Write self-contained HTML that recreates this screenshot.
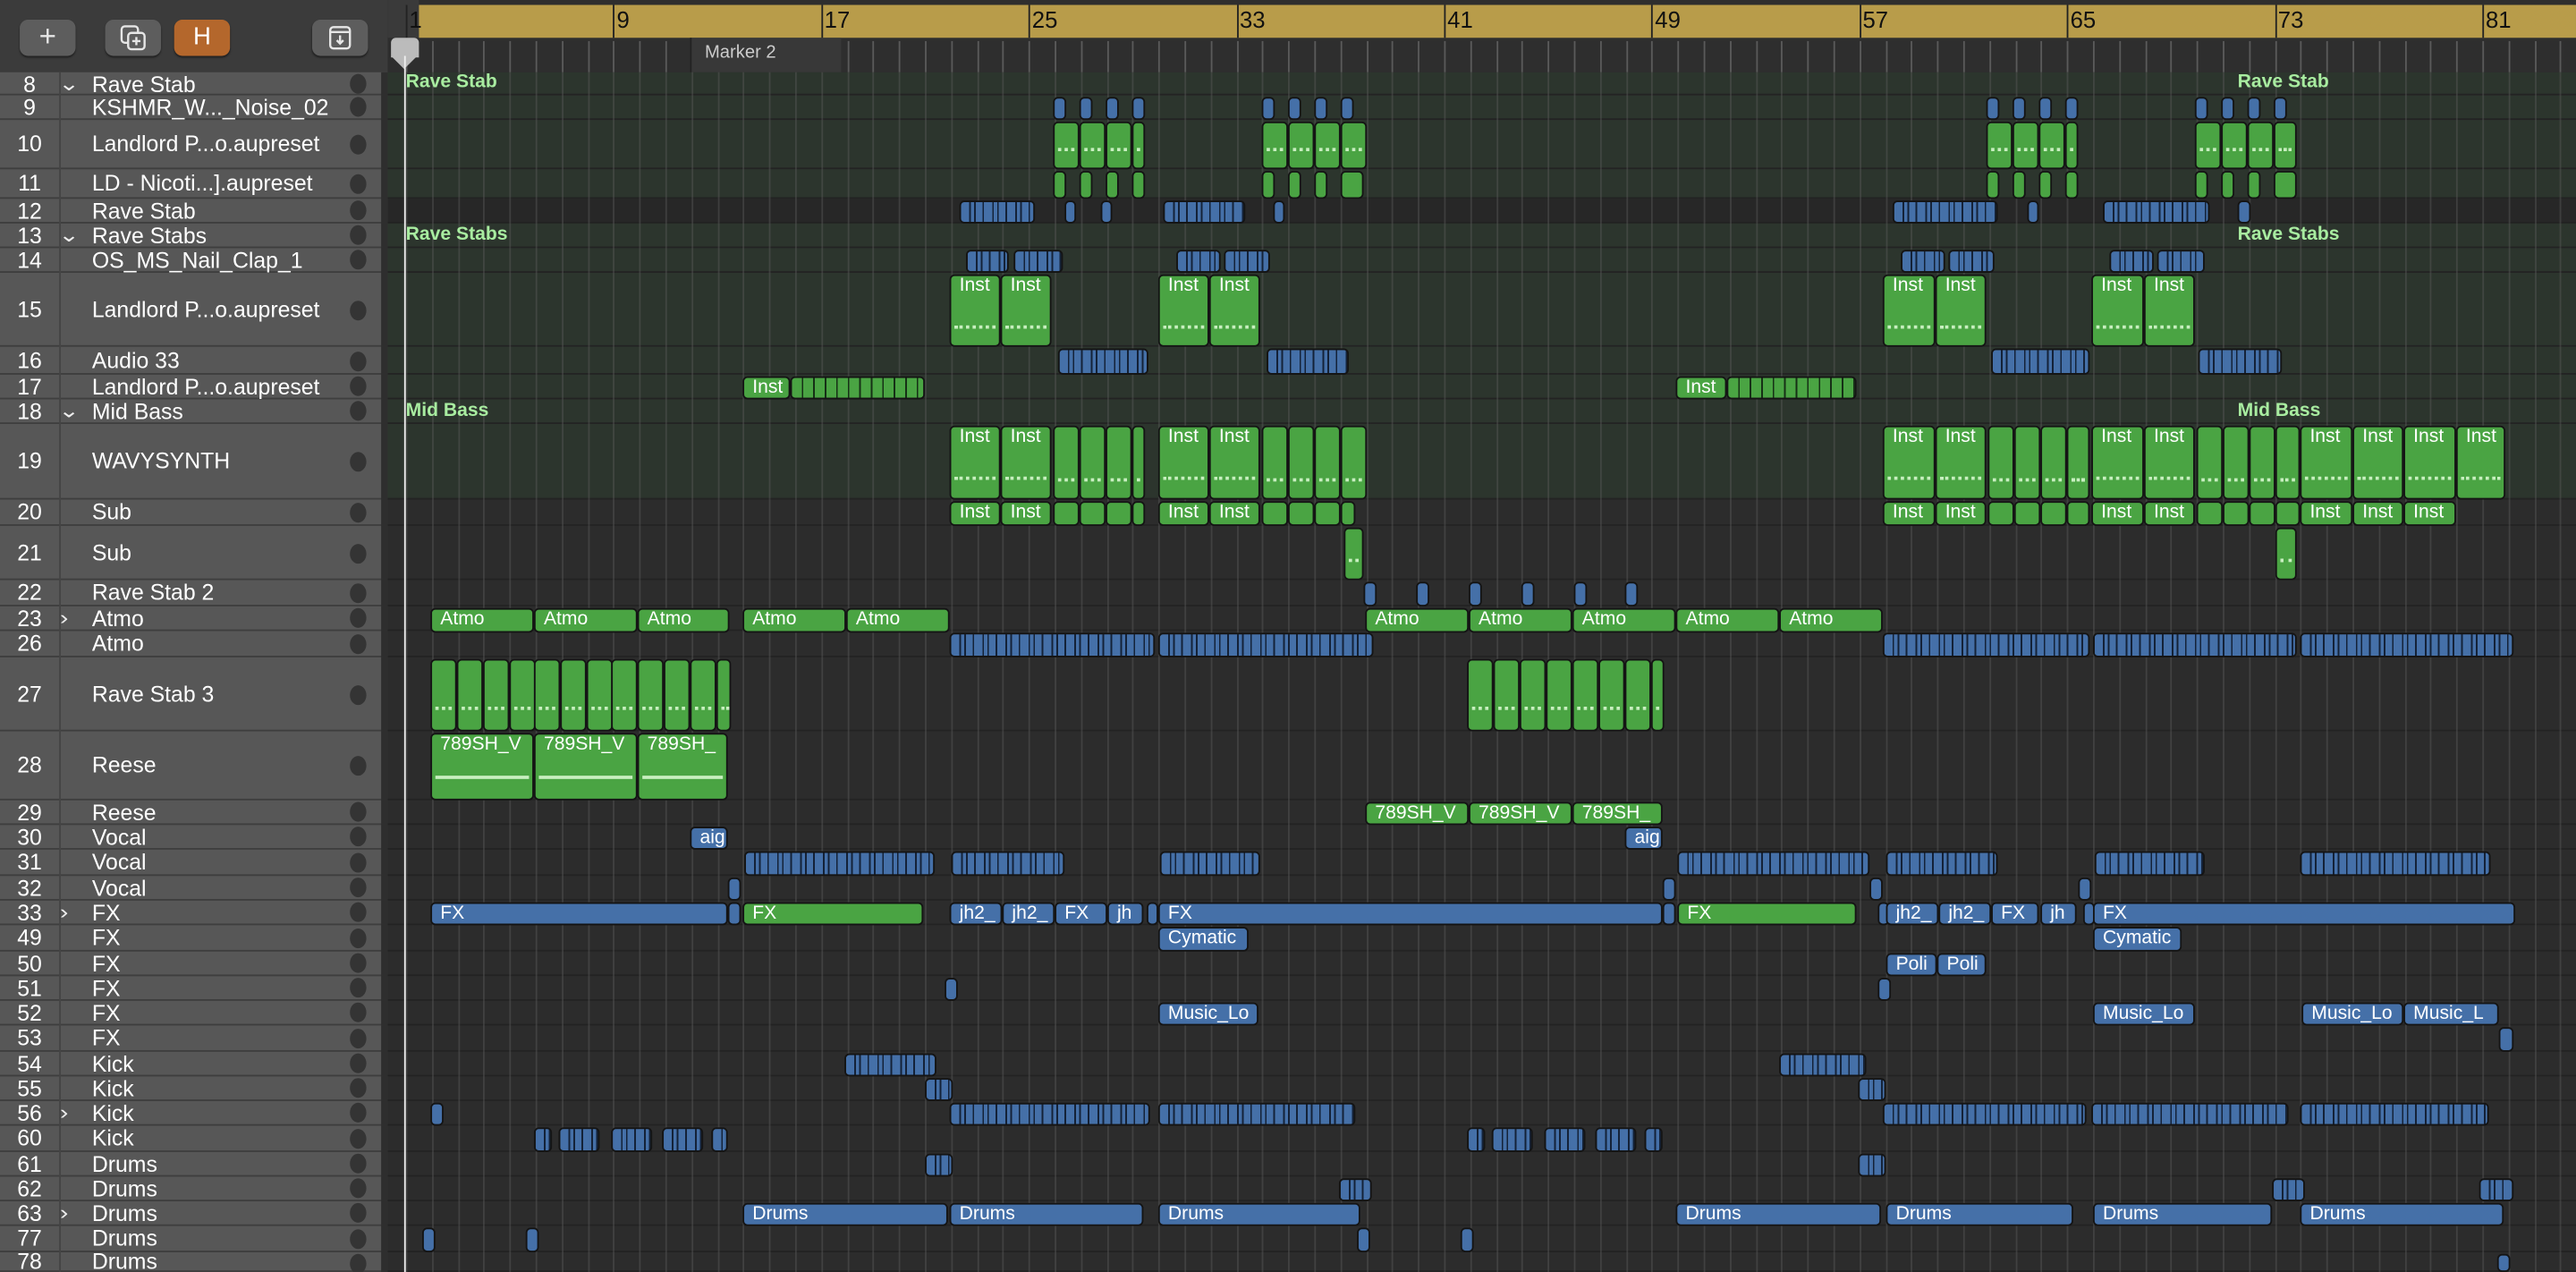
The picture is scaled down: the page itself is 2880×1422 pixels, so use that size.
<!DOCTYPE html>
<html><head><meta charset="utf-8"><style>
*{margin:0;padding:0;box-sizing:border-box}
body{width:2880px;height:1422px;overflow:hidden;background:#2c2c2c;font-family:"Liberation Sans",sans-serif}
#w{position:absolute;left:0;top:0;width:1568px;height:774px;transform:scale(1.83673,1.83721);transform-origin:0 0;overflow:hidden;background:#2c2c2c}
.a{position:absolute}
#tl{position:absolute;left:0;top:44px;width:236px;height:730px;background:#575757}
.tr{position:absolute;left:0;width:236px;border-bottom:1px solid #3e3e3e;color:#fff;font-size:13.5px;line-height:15px}
.tr .n{position:absolute;left:0;width:36px;text-align:center}
.tr .t{position:absolute;left:56px;white-space:nowrap}
.tr .d{position:absolute;left:213px;width:10px;height:12px;border-radius:50%;background:#343434}
.tr .c{position:absolute;left:37px;font-size:12px;color:#eee;transform:scaleX(1.3)}
.ar{position:absolute;left:236px;width:1332px;border-bottom:1px solid #232323}
.r{position:absolute;border:1px solid #141414;border-radius:3px;color:#fff;font-size:11.5px;line-height:13px;padding-left:5px;overflow:hidden;white-space:nowrap}
.b{background:#4570a8}
.g{background:#4aa443}
.fl{position:absolute;left:247px;color:#a8eca0;font-weight:bold;font-size:11.5px}
.btn{position:absolute;top:12px;width:34px;height:22px;border-radius:5px;background:#5d5d5d;color:#e6e6e6;text-align:center;font-size:18px;line-height:21px;box-shadow:0 1px 1px #222}
.dots{position:absolute;left:2px;right:2px;border-top:2px dotted #c8efc0}
</style></head><body><div id="w">
<div class="a" style="left:0;top:0;width:236px;height:44px;background:#3b3b3b"></div>
<div class="btn" style="left:12px">+</div>
<div class="btn" style="left:64px"><svg width="16" height="16" viewBox="0 0 16 16" style="margin-top:3px" fill="none" stroke="#e6e6e6" stroke-width="1.3"><rect x="1" y="1" width="10" height="10" rx="2"/><rect x="5" y="5" width="10" height="10" rx="2" fill="#5d5d5d"/><path d="M10 7.5v5M7.5 10h5"/></svg></div>
<div class="btn" style="left:106px;background:#b4672c;color:#fff;font-size:15px">H</div>
<div class="btn" style="left:190px"><svg width="16" height="16" viewBox="0 0 16 16" style="margin-top:3px" fill="none" stroke="#e6e6e6" stroke-width="1.3"><rect x="2" y="1.5" width="12" height="13" rx="2"/><path d="M2 4.5h12M8 6.5v5M6 9.5l2 2 2-2"/></svg></div>
<div class="a" style="left:236px;top:0;width:1332px;height:44px;background:#2e2e2e"></div>
<div class="a" style="left:236px;top:0;width:19px;height:23px;background:#3a3a3a"></div>
<div class="a" style="left:255px;top:3px;width:1313px;height:20px;background:#b89c4a"></div>
<div id="rul"></div>
<div class="a" style="left:420px;top:23px;width:92px;height:21px;background:#383838;border-left:1px solid #222"></div>
<div class="a" style="left:429px;top:26px;color:#ccc;font-size:11px">Marker 2</div>
<div class="a" style="left:238px;top:23px;width:17px;height:12px;background:#bbb;border-radius:3px 3px 0 0"></div>
<div class="a" style="left:238px;top:34px;width:0;height:0;border-left:8.5px solid transparent;border-right:8.5px solid transparent;border-top:8px solid #bbb"></div>
<div id="tl"></div>
<div id="arr"></div>
<div class="fl" style="top:44px">Rave Stab</div><div class="fl" style="top:44px;left:1362px">Rave Stab</div>
<div class="fl" style="top:137px">Rave Stabs</div><div class="fl" style="top:137px;left:1362px">Rave Stabs</div>
<div class="fl" style="top:244px">Mid Bass</div><div class="fl" style="top:244px;left:1362px">Mid Bass</div>
<div id="reg"></div>
<div class="r g" style="left:578px;top:167px;width:31px;height:44px">Inst<div class="dots" style="top:30px"></div></div>
<div class="r g" style="left:609px;top:167px;width:31px;height:44px">Inst<div class="dots" style="top:30px"></div></div>
<div class="r g" style="left:705px;top:167px;width:31px;height:44px">Inst<div class="dots" style="top:30px"></div></div>
<div class="r g" style="left:736px;top:167px;width:31px;height:44px">Inst<div class="dots" style="top:30px"></div></div>
<div class="r g" style="left:1146px;top:167px;width:32px;height:44px">Inst<div class="dots" style="top:30px"></div></div>
<div class="r g" style="left:1178px;top:167px;width:31px;height:44px">Inst<div class="dots" style="top:30px"></div></div>
<div class="r g" style="left:1273px;top:167px;width:32px;height:44px">Inst<div class="dots" style="top:30px"></div></div>
<div class="r g" style="left:1305px;top:167px;width:31px;height:44px">Inst<div class="dots" style="top:30px"></div></div>
<div class="r g" style="left:452px;top:229px;width:29px;height:14px">Inst</div>
<div class="r g" style="left:1020px;top:229px;width:31px;height:14px">Inst</div>
<div class="r g" style="left:578px;top:259px;width:31px;height:45px">Inst<div class="dots" style="top:30px"></div></div>
<div class="r g" style="left:609px;top:259px;width:31px;height:45px">Inst<div class="dots" style="top:30px"></div></div>
<div class="r g" style="left:705px;top:259px;width:31px;height:45px">Inst<div class="dots" style="top:30px"></div></div>
<div class="r g" style="left:736px;top:259px;width:31px;height:45px">Inst<div class="dots" style="top:30px"></div></div>
<div class="r g" style="left:1146px;top:259px;width:32px;height:45px">Inst<div class="dots" style="top:30px"></div></div>
<div class="r g" style="left:1178px;top:259px;width:31px;height:45px">Inst<div class="dots" style="top:30px"></div></div>
<div class="r g" style="left:1273px;top:259px;width:32px;height:45px">Inst<div class="dots" style="top:30px"></div></div>
<div class="r g" style="left:1305px;top:259px;width:31px;height:45px">Inst<div class="dots" style="top:30px"></div></div>
<div class="r g" style="left:1400px;top:259px;width:32px;height:45px">Inst<div class="dots" style="top:30px"></div></div>
<div class="r g" style="left:1432px;top:259px;width:31px;height:45px">Inst<div class="dots" style="top:30px"></div></div>
<div class="r g" style="left:1463px;top:259px;width:32px;height:45px">Inst<div class="dots" style="top:30px"></div></div>
<div class="r g" style="left:1495px;top:259px;width:30px;height:45px">Inst<div class="dots" style="top:30px"></div></div>
<div class="r g" style="left:578px;top:305px;width:31px;height:15px">Inst</div>
<div class="r g" style="left:609px;top:305px;width:31px;height:15px">Inst</div>
<div class="r g" style="left:705px;top:305px;width:31px;height:15px">Inst</div>
<div class="r g" style="left:736px;top:305px;width:31px;height:15px">Inst</div>
<div class="r g" style="left:1146px;top:305px;width:32px;height:15px">Inst</div>
<div class="r g" style="left:1178px;top:305px;width:31px;height:15px">Inst</div>
<div class="r g" style="left:1273px;top:305px;width:32px;height:15px">Inst</div>
<div class="r g" style="left:1305px;top:305px;width:31px;height:15px">Inst</div>
<div class="r g" style="left:1400px;top:305px;width:32px;height:15px">Inst</div>
<div class="r g" style="left:1432px;top:305px;width:31px;height:15px">Inst</div>
<div class="r g" style="left:1463px;top:305px;width:32px;height:15px">Inst</div>
<div class="r g" style="left:262px;top:370px;width:63px;height:15px">Atmo</div>
<div class="r g" style="left:325px;top:370px;width:63px;height:15px">Atmo</div>
<div class="r g" style="left:388px;top:370px;width:56px;height:15px">Atmo</div>
<div class="r g" style="left:452px;top:370px;width:63px;height:15px">Atmo</div>
<div class="r g" style="left:515px;top:370px;width:63px;height:15px">Atmo</div>
<div class="r g" style="left:831px;top:370px;width:63px;height:15px">Atmo</div>
<div class="r g" style="left:894px;top:370px;width:63px;height:15px">Atmo</div>
<div class="r g" style="left:957px;top:370px;width:63px;height:15px">Atmo</div>
<div class="r g" style="left:1020px;top:370px;width:63px;height:15px">Atmo</div>
<div class="r g" style="left:1083px;top:370px;width:63px;height:15px">Atmo</div>
<div class="r g" style="left:262px;top:446px;width:63px;height:41px">789SH_V<div class="dots" style="top:25px;border-top:2px solid #c8efc0"></div></div>
<div class="r g" style="left:325px;top:446px;width:63px;height:41px">789SH_V<div class="dots" style="top:25px;border-top:2px solid #c8efc0"></div></div>
<div class="r g" style="left:388px;top:446px;width:55px;height:41px">789SH_<div class="dots" style="top:25px;border-top:2px solid #c8efc0"></div></div>
<div class="r g" style="left:831px;top:488px;width:63px;height:14px">789SH_V</div>
<div class="r g" style="left:894px;top:488px;width:63px;height:14px">789SH_V</div>
<div class="r g" style="left:957px;top:488px;width:55px;height:14px">789SH_</div>
<div class="r b" style="left:420px;top:503px;width:23px;height:14px">aig</div>
<div class="r b" style="left:989px;top:503px;width:23px;height:14px">aig</div>
<div class="r b" style="left:262px;top:549px;width:181px;height:14px">FX</div>
<div class="r g" style="left:452px;top:549px;width:110px;height:14px">FX</div>
<div class="r b" style="left:578px;top:549px;width:32px;height:14px">jh2_</div>
<div class="r b" style="left:610px;top:549px;width:32px;height:14px">jh2_</div>
<div class="r b" style="left:642px;top:549px;width:32px;height:14px">FX</div>
<div class="r b" style="left:674px;top:549px;width:22px;height:14px">jh</div>
<div class="r b" style="left:705px;top:549px;width:307px;height:14px">FX</div>
<div class="r g" style="left:1021px;top:549px;width:109px;height:14px">FX</div>
<div class="r b" style="left:1148px;top:549px;width:32px;height:14px">jh2_</div>
<div class="r b" style="left:1180px;top:549px;width:32px;height:14px">jh2_</div>
<div class="r b" style="left:1212px;top:549px;width:29px;height:14px">FX</div>
<div class="r b" style="left:1242px;top:549px;width:22px;height:14px">jh</div>
<div class="r b" style="left:1274px;top:549px;width:257px;height:14px">FX</div>
<div class="r b" style="left:705px;top:564px;width:55px;height:15px">Cymatic</div>
<div class="r b" style="left:1274px;top:564px;width:54px;height:15px">Cymatic</div>
<div class="r b" style="left:1148px;top:580px;width:31px;height:14px">Poli</div>
<div class="r b" style="left:1179px;top:580px;width:30px;height:14px">Poli</div>
<div class="r b" style="left:705px;top:610px;width:61px;height:14px">Music_Lo</div>
<div class="r b" style="left:1274px;top:610px;width:62px;height:14px">Music_Lo</div>
<div class="r b" style="left:1401px;top:610px;width:62px;height:14px">Music_Lo</div>
<div class="r b" style="left:1463px;top:610px;width:58px;height:14px">Music_L</div>
<div class="r b" style="left:452px;top:732px;width:125px;height:14px">Drums</div>
<div class="r b" style="left:578px;top:732px;width:118px;height:14px">Drums</div>
<div class="r b" style="left:705px;top:732px;width:123px;height:14px">Drums</div>
<div class="r b" style="left:1020px;top:732px;width:125px;height:14px">Drums</div>
<div class="r b" style="left:1148px;top:732px;width:114px;height:14px">Drums</div>
<div class="r b" style="left:1274px;top:732px;width:109px;height:14px">Drums</div>
<div class="r b" style="left:1400px;top:732px;width:124px;height:14px">Drums</div>
<div id="names" style="position:absolute;left:0;top:0">
<div class="tr" style="top:44px;height:14px"><span class="n">8</span><span class="c">⌄</span><span class="t">Rave Stab</span><span class="d" style="top:1px"></span></div>
<div class="tr" style="top:58px;height:15px"><span class="n">9</span><span class="t">KSHMR_W..._Noise_02</span><span class="d" style="top:1px"></span></div>
<div class="tr" style="top:73px;height:30px;line-height:30px"><span class="n">10</span><span class="t">Landlord P...o.aupreset</span><span class="d" style="top:9px"></span></div>
<div class="tr" style="top:103px;height:18px;line-height:18px"><span class="n">11</span><span class="t">LD - Nicoti...].aupreset</span><span class="d" style="top:3px"></span></div>
<div class="tr" style="top:121px;height:15px"><span class="n">12</span><span class="t">Rave Stab</span><span class="d" style="top:1px"></span></div>
<div class="tr" style="top:136px;height:15px"><span class="n">13</span><span class="c">⌄</span><span class="t">Rave Stabs</span><span class="d" style="top:1px"></span></div>
<div class="tr" style="top:151px;height:15px"><span class="n">14</span><span class="t">OS_MS_Nail_Clap_1</span><span class="d" style="top:1px"></span></div>
<div class="tr" style="top:166px;height:45px;line-height:45px"><span class="n">15</span><span class="t">Landlord P...o.aupreset</span><span class="d" style="top:17px"></span></div>
<div class="tr" style="top:211px;height:17px;line-height:17px"><span class="n">16</span><span class="t">Audio 33</span><span class="d" style="top:3px"></span></div>
<div class="tr" style="top:228px;height:15px"><span class="n">17</span><span class="t">Landlord P...o.aupreset</span><span class="d" style="top:1px"></span></div>
<div class="tr" style="top:243px;height:15px"><span class="n">18</span><span class="c">⌄</span><span class="t">Mid Bass</span><span class="d" style="top:1px"></span></div>
<div class="tr" style="top:258px;height:46px;line-height:46px"><span class="n">19</span><span class="t">WAVYSYNTH</span><span class="d" style="top:17px"></span></div>
<div class="tr" style="top:304px;height:16px"><span class="n">20</span><span class="t">Sub</span><span class="d" style="top:2px"></span></div>
<div class="tr" style="top:320px;height:33px;line-height:33px"><span class="n">21</span><span class="t">Sub</span><span class="d" style="top:11px"></span></div>
<div class="tr" style="top:353px;height:16px"><span class="n">22</span><span class="t">Rave Stab 2</span><span class="d" style="top:2px"></span></div>
<div class="tr" style="top:369px;height:15px"><span class="n">23</span><span class="c">›</span><span class="t">Atmo</span><span class="d" style="top:1px"></span></div>
<div class="tr" style="top:384px;height:16px"><span class="n">26</span><span class="t">Atmo</span><span class="d" style="top:2px"></span></div>
<div class="tr" style="top:400px;height:45px;line-height:45px"><span class="n">27</span><span class="t">Rave Stab 3</span><span class="d" style="top:17px"></span></div>
<div class="tr" style="top:445px;height:42px;line-height:42px"><span class="n">28</span><span class="t">Reese</span><span class="d" style="top:15px"></span></div>
<div class="tr" style="top:487px;height:15px"><span class="n">29</span><span class="t">Reese</span><span class="d" style="top:1px"></span></div>
<div class="tr" style="top:502px;height:15px"><span class="n">30</span><span class="t">Vocal</span><span class="d" style="top:1px"></span></div>
<div class="tr" style="top:517px;height:16px"><span class="n">31</span><span class="t">Vocal</span><span class="d" style="top:2px"></span></div>
<div class="tr" style="top:533px;height:15px"><span class="n">32</span><span class="t">Vocal</span><span class="d" style="top:1px"></span></div>
<div class="tr" style="top:548px;height:15px"><span class="n">33</span><span class="c">›</span><span class="t">FX</span><span class="d" style="top:1px"></span></div>
<div class="tr" style="top:563px;height:16px"><span class="n">49</span><span class="t">FX</span><span class="d" style="top:2px"></span></div>
<div class="tr" style="top:579px;height:15px"><span class="n">50</span><span class="t">FX</span><span class="d" style="top:1px"></span></div>
<div class="tr" style="top:594px;height:15px"><span class="n">51</span><span class="t">FX</span><span class="d" style="top:1px"></span></div>
<div class="tr" style="top:609px;height:15px"><span class="n">52</span><span class="t">FX</span><span class="d" style="top:1px"></span></div>
<div class="tr" style="top:624px;height:16px"><span class="n">53</span><span class="t">FX</span><span class="d" style="top:2px"></span></div>
<div class="tr" style="top:640px;height:15px"><span class="n">54</span><span class="t">Kick</span><span class="d" style="top:1px"></span></div>
<div class="tr" style="top:655px;height:15px"><span class="n">55</span><span class="t">Kick</span><span class="d" style="top:1px"></span></div>
<div class="tr" style="top:670px;height:15px"><span class="n">56</span><span class="c">›</span><span class="t">Kick</span><span class="d" style="top:1px"></span></div>
<div class="tr" style="top:685px;height:16px"><span class="n">60</span><span class="t">Kick</span><span class="d" style="top:2px"></span></div>
<div class="tr" style="top:701px;height:15px"><span class="n">61</span><span class="t">Drums</span><span class="d" style="top:1px"></span></div>
<div class="tr" style="top:716px;height:15px"><span class="n">62</span><span class="t">Drums</span><span class="d" style="top:1px"></span></div>
<div class="tr" style="top:731px;height:15px"><span class="n">63</span><span class="c">›</span><span class="t">Drums</span><span class="d" style="top:1px"></span></div>
<div class="tr" style="top:746px;height:16px"><span class="n">77</span><span class="t">Drums</span><span class="d" style="top:2px"></span></div>
<div class="tr" style="top:762px;height:12px;line-height:12px"><span class="n">78</span><span class="t">Drums</span><span class="d" style="top:1px"></span></div>
</div>
<div class="a" style="left:36px;top:44px;width:1px;height:730px;background:#444"></div>
<div class="a" style="left:232px;top:44px;width:4px;height:730px;background:#2e2e2e"></div>
<div class="a" style="left:246px;top:34px;width:1px;height:740px;background:#eee"></div>
</div>
<script>
(function(){
var R={8:[44,14],9:[58,15],10:[73,30],11:[103,18],12:[121,15],13:[136,15],14:[151,15],15:[166,45],16:[211,17],17:[228,15],18:[243,15],19:[258,46],20:[304,16],21:[320,33],22:[353,16],23:[369,15],26:[384,16],27:[400,45],28:[445,42],29:[487,15],30:[502,15],31:[517,16],32:[533,15],33:[548,15],49:[563,16],50:[579,15],51:[594,15],52:[609,15],53:[624,16],54:[640,15],55:[655,15],56:[670,15],60:[685,16],61:[701,15],62:[716,15],63:[731,15],77:[746,16],78:[762,12]};
var arr=document.getElementById('arr'),h='';
var green={8:1,9:1,10:1,11:1,13:1,14:1,15:1,16:1,17:1,18:1,19:1};
for(var k in R){var bg=green[k]?'#2c352d':(k==12?'#272727':'#2c2c2c');
h+='<div class="ar" style="top:'+R[k][0]+'px;height:'+R[k][1]+'px;background:'+bg+'"></div>';
h+='<div class="a" style="left:0;top:'+R[k][0]+'px;width:236px;height:'+R[k][1]+'px;background:#575757"></div>';}
var g='';for(var x=247;x<1568;x+=15.8){g+='<div class="a" style="left:'+x.toFixed(1)+'px;top:44px;width:1px;height:730px;background:rgba(90,90,90,.45)"></div>';}
arr.innerHTML=h+g;
var ru='';for(var b=1;b<=85;b++){var x=247+(b-1)*15.8;if(x>1568)break;
ru+='<div class="a" style="left:'+x.toFixed(1)+'px;top:25px;width:1px;height:19px;background:#5a5a5a"></div>';
if((b-1)%8==0){ru+='<div class="a" style="left:'+x.toFixed(1)+'px;top:3px;width:1px;height:20px;background:#222"></div><div class="a" style="left:'+(x+2).toFixed(1)+'px;top:4px;font-size:14px;color:#111">'+b+'</div>';}}
document.getElementById('rul').innerHTML=ru;
function box(row,x1,x2,t){var r=R[row],top=r[0]+1,hh=r[1]-1,s='';
if(t=='c'){s='background:repeating-linear-gradient(90deg,#4570a8 0 5px,#142238 5px 6px,#4570a8 6px 8px,#142238 8px 9px,#4570a8 9px 13px,#142238 13px 14px);';}
else if(t=='gc'){s='background:repeating-linear-gradient(90deg,#4aa443 0 6px,#163016 6px 7px);';}
else if(t=='b'){s='background:#4570a8;';}else{s='background:#4aa443;';}
var inner='';if(t=='gt'&&hh>25)inner='<div class="dots" style="top:'+(hh-14)+'px"></div>';
if(t=='gt'&&row==27)inner='<div class="dots" style="top:28px"></div>';
return '<div class="r" style="left:'+x1+'px;top:'+top+'px;width:'+(x2-x1)+'px;height:'+hh+'px;'+s+'">'+inner+'</div>';}
var L=[];
function seq(row,xs,w,t){xs.forEach(function(x){L.push([row,x,x+w,t]);});}
seq(9,[641,657,673,689,768,784,800,816,1209,1225,1241,1257,1336,1352,1368,1384],8,'b');
seq(10,[641,657,673,768,784,800,816,1209,1225,1241,1336,1352,1368],16,'gt');L.push([10,689,697,'gt'],[10,1257,1265,'gt'],[10,1384,1398,'gt']);
seq(11,[641,657,673,689,768,784,800,1209,1225,1241,1257,1336,1352,1368],8,'g');L.push([11,816,830,'g'],[11,1384,1398,'g']);
L.push([12,584,630,'c'],[12,648,655,'b'],[12,670,677,'b'],[12,708,758,'c'],[12,775,782,'b'],[12,1152,1216,'c'],[12,1234,1241,'b'],[12,1280,1345,'c'],[12,1362,1370,'b']);
L.push([14,588,614,'c'],[14,617,647,'c'],[14,716,743,'c'],[14,745,773,'c'],[14,1157,1184,'c'],[14,1186,1214,'c'],[14,1284,1311,'c'],[14,1313,1342,'c']);
L.push([16,644,699,'c'],[16,771,821,'c'],[16,1212,1272,'c'],[16,1338,1389,'c']);
L.push([17,481,563,'gc'],[17,1051,1130,'gc']);
seq(19,[641,657,673,768,784,800,816,1210,1226,1242,1337,1353,1369],16,'gt');L.push([19,689,697,'gt'],[19,1258,1272,'gt'],[19,1385,1400,'gt']);
seq(20,[641,657,673,768,784,800,1210,1226,1242,1337,1353,1369],16,'g');L.push([20,689,697,'g'],[20,816,825,'g'],[20,1258,1272,'g'],[20,1385,1400,'g']);
L.push([21,818,830,'gt'],[21,1385,1398,'gt']);
seq(22,[830,862,894,926,958,989],8,'b');
L.push([26,578,703,'c'],[26,705,836,'c'],[26,1146,1272,'c'],[26,1274,1398,'c'],[26,1400,1530,'c']);
seq(27,[262,278,294,310,325,341,357,372,388,404,420],16,'gt');L.push([27,436,445,'gt']);
seq(27,[893,909,925,941,957,973,989],16,'gt');L.push([27,1005,1013,'gt']);
L.push([31,453,569,'c'],[31,579,648,'c'],[31,706,767,'c'],[31,1021,1138,'c'],[31,1148,1216,'c'],[31,1275,1342,'c'],[31,1400,1516,'c']);
L.push([32,443,451,'b'],[32,1012,1020,'b'],[32,1138,1146,'b'],[32,1265,1273,'b']);
L.push([33,443,451,'b'],[33,1012,1020,'b'],[33,1143,1147,'b'],[33,1268,1272,'b'],[33,698,703,'b']);
L.push([51,575,583,'b'],[51,1143,1151,'b'],[53,1521,1530,'b']);
L.push([54,514,570,'c'],[54,1083,1136,'c'],[55,563,580,'c'],[55,1131,1148,'c']);
L.push([56,262,270,'b'],[56,578,700,'c'],[56,705,825,'c'],[56,1146,1270,'c'],[56,1273,1393,'c'],[56,1400,1515,'c']);
L.push([60,325,336,'c'],[60,340,365,'c'],[60,372,397,'c'],[60,403,428,'c'],[60,433,443,'c'],[60,893,904,'c'],[60,908,933,'c'],[60,940,965,'c'],[60,971,996,'c'],[60,1001,1012,'c']);
L.push([61,563,580,'c'],[61,1131,1148,'c'],[62,815,835,'c'],[62,1383,1403,'c'],[62,1509,1530,'c']);
seq(77,[257,320,826,889],8,'b');L.push([78,1520,1528,'b']);
var o='';L.forEach(function(a){o+=box(a[0],a[1],a[2],a[3]);});
document.getElementById('reg').innerHTML=o;
})();
</script>
</body></html>
